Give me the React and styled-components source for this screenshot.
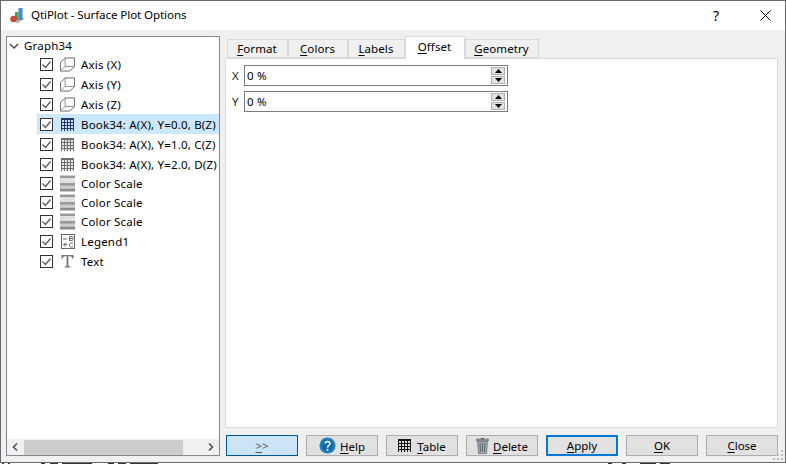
import React from 'react';
import styled, { createGlobalStyle } from 'styled-components';

const Global = createGlobalStyle`
  html, body { margin: 0; padding: 0; background: #fff; }
  body { width: 786px; height: 464px; overflow: hidden; font-family: "Noto Sans", "DejaVu Sans", sans-serif; }
`;
const Page = styled.div`display: flex; flex-direction: column; width: 786px; height: 464px;`;
const Win = styled.div`
  width: 786px; height: 463px; box-sizing: border-box; background: #f0f0f0;
  border: 1px solid #6a6a6a; display: flex; flex-direction: column; position: relative;
`;
const Residue = styled.svg`display: block; width: 786px; height: 1px; flex: none;`;
const TitleBar = styled.div`
  height: 29px; flex: none; background: #fff; display: flex; align-items: center; color: #000;
  font-size: 11.6px; padding-left: 8px;
`;
const TitleText = styled.div`margin-left: 6px; flex: 1; letter-spacing: -0.1px; padding-bottom: 2px;`;
const TitleBtn = styled.div`
  width: 46px; height: 29px; box-sizing: border-box; padding-left: ${p => p.$pl ?? 0}px;
  display: flex; align-items: center; justify-content: center; font-size: 14px;
`;
const Body = styled.div`flex: 1; display: flex; padding: 6px 7px 6px 5px; gap: 5px; min-height: 0;`;
const TreeBox = styled.div`
  width: 214px; flex: none; box-sizing: border-box; border: 1px solid #828790; background: #fff;
  display: flex; flex-direction: column;
`;
const TreeList = styled.div`flex: 1; min-height: 0; overflow: hidden; font-size: 11.5px; color: #000;`;
const Row = styled.div`
  height: ${p => p.$h}px; display: flex; align-items: center; white-space: nowrap;
  margin-left: 30px; padding-left: 3px; overflow: hidden;
  background: ${p => p.$sel ? '#cce8ff' : 'transparent'};
`;
const RootRow = styled.div`height: 17px; display: flex; align-items: center; padding-left: 2px; gap: 5px;`;
const Check = styled.svg`width: 13px; height: 13px; flex: none; margin-right: 7px;`;
const IconSlot = styled.span`
  width: 15px; height: 18px; flex: none; display: flex; align-items: center; justify-content: center; margin-right: 6px;
`;
const Label = styled.span`letter-spacing: 0.19px;`;
const HScroll = styled.div`height: 16px; flex: none; background: #f0f0f0; display: flex; align-items: center;`;
const ScrollArrow = styled.svg`width: 17px; height: 16px; flex: none;`;
const ScrollThumb = styled.div`height: 15px; width: 159px; background: #cdcdcd;`;
const ScrollRest = styled.div`flex: 1;`;
const Right = styled.div`flex: 1; display: flex; flex-direction: column; min-width: 0;`;
const TabBar = styled.div`height: 22px; flex: none; display: flex; align-items: flex-end; padding-left: 2px; position: relative; z-index: 1; font-size: 11.5px;`;
const Tab = styled.div`
  box-sizing: border-box; width: ${p => p.$w}px;
  height: ${p => p.$active ? 23 : 19}px; margin-bottom: ${p => p.$active ? -1 : 0}px;
  padding-bottom: ${p => p.$active ? 3 : 0}px;
  padding-right: 1px;
  background: ${p => p.$active ? '#fff' : '#f0f0f0'};
  border: 1px solid #d9d9d9; border-bottom: ${p => p.$active ? 'none' : '1px solid #d9d9d9'};
  display: flex; align-items: center; justify-content: center; color: #000; letter-spacing: 0.1px;
`;
const U = styled.span`text-decoration: underline; text-underline-offset: 2px;`;
const Panel = styled.div`
  flex: 1; box-sizing: border-box; background: #fff; border: 1px solid #d9d9d9; padding: 6px 6px;
  display: flex; flex-direction: column; gap: 5px; font-size: 11.5px; width: 553px;
`;
const SpinRow = styled.div`display: flex; align-items: center; height: 21px;`;
const SpinLabel = styled.div`width: 12px; color: #222;`;
const SpinInput = styled.div`
  width: 264px; height: 21px; box-sizing: border-box; border: 1px solid #7a7a7a; background: #fff;
  display: flex; align-items: center; justify-content: space-between; padding: 1px 1px 1px 2px; color: #000;
`;
const SpinVal = styled.span`letter-spacing: 0.2px;`;
const SpinBtns = styled.div`display: flex; flex-direction: column; gap: 1px; width: 14px; margin-right: 1px;`;
const SpinBtn = styled.div`
  height: 8px; background: #e1e1e1; border: 1px solid #b0b0b0; box-sizing: border-box;
  display: flex; align-items: center; justify-content: center;
`;
const Tri = styled.svg`width: 7px; height: 4px; display: block;`;
const Footer = styled.div`flex: none; height: 21px; margin-top: 7px; display: flex; gap: 8px; padding-left: 1px; font-size: 11.5px;`;
const Btn = styled.div`
  width: 72px; height: 21px; box-sizing: border-box; display: flex; align-items: center; justify-content: center; gap: 4px;
  color: ${p => p.$primary ? '#555' : '#000'};
  background: ${p => p.$primary ? '#cce4f7' : '#e1e1e1'};
  border: ${p => p.$apply ? '2px solid #0078d7' : p.$primary ? '1px solid #005499' : '1px solid #adadad'};
`;
const IconLabel = styled.span`margin-top: 1px; margin-left: ${p => p.$ml ?? 0}px;`;
const Grip = styled.svg`position: absolute; right: 1px; bottom: 1px; width: 12px; height: 12px;`;

const CheckIcon = () => (
  <Check viewBox="0 0 13 13">
    <rect x="0.5" y="0.5" width="12" height="12" fill="#fff" stroke="#333" />
    <path d="M2.5 6.5l3 3 5-6" fill="none" stroke="#555" strokeWidth="1.2" />
  </Check>
);
const Cube = () => (
  <svg width="16" height="15" viewBox="0 0 16 15" fill="none" stroke="#666" strokeWidth="1">
    <path d="M0.5 14.5V5.5L5.5 0.5H15.5V9.5L10.5 14.5Z" />
    <path d="M5.5 0.5V9.5H15.5M5.5 9.5L0.5 14.5" stroke="#8a8a8a" />
  </svg>
);
const GridCells = ({ fill }) => [1, 4, 7, 10].flatMap(x => [2, 5, 8, 11].map(y => (
  <rect key={x + '-' + y} x={x} y={y} width="2" height="2" fill={fill} />
)));
const Grid = ({ c, cell }) => (
  <svg width="13" height="13" viewBox="0 0 13 13">
    <rect width="13" height="13" fill={c} />
    <GridCells fill={cell} />
  </svg>
);
const Scale = () => (
  <svg width="16" height="17" viewBox="0 0 16 17">
    <rect y="0" width="16" height="3" fill="#999" />
    <rect y="3" width="16" height="3" fill="#e2e2e2" />
    <rect y="6" width="16" height="2" fill="#ddd" />
    <rect y="8" width="16" height="3" fill="#999" />
    <rect y="11" width="16" height="3" fill="#ccc" />
    <rect y="14" width="16" height="3" fill="#8c8c8c" />
  </svg>
);
const LegendIcon = () => (
  <svg width="14" height="15" viewBox="0 0 14 15" fill="none" stroke="#666">
    <rect x="0.5" y="0.5" width="13" height="14" />
    <path d="M2 5h4M2 10.5h4" />
    <path d="M8.5 2.5h2.5q1 0 1 1t-1 1h-2.5m0 0h2.5q1 0 1 1t-1 1h-2.5zM8.5 2.5v4.5M12 9h-2.5q-1 0-1 2t1 2h2.5" strokeWidth="0.9" />
    <path d="M4 8.5v4" />
  </svg>
);
const TextIcon = () => (
  <svg width="13" height="14" viewBox="0 0 14 14" fill="#777">
    <path d="M0.5 0.5h13v4h-1Q12 1.5 8 1.5v11l2 .5v1H4v-1l2-.5v-11Q2 1.5 1.5 4.5h-1z" />
  </svg>
);

const rows = [
  { h: 20, t: 'Axis (X)', i: <Cube /> },
  { h: 20, t: 'Axis (Y)', i: <Cube /> },
  { h: 20, t: 'Axis (Z)', i: <Cube /> },
  { h: 20, t: 'Book34: A(X), Y=0.0, B(Z)', i: <Grid c="#1f3864" cell="#cfe0f0" />, sel: true },
  { h: 20, t: 'Book34: A(X), Y=1.0, C(Z)', i: <Grid c="#6e6e6e" cell="#e8e8e8" /> },
  { h: 20, t: 'Book34: A(X), Y=2.0, D(Z)', i: <Grid c="#6e6e6e" cell="#e8e8e8" /> },
  { h: 19, t: 'Color Scale', i: <Scale /> },
  { h: 19, t: 'Color Scale', i: <Scale /> },
  { h: 19, t: 'Color Scale', i: <Scale /> },
  { h: 20, t: 'Legend1', i: <LegendIcon /> },
  { h: 20, t: 'Text', i: <TextIcon /> },
];

const Spin = ({ label }) => (
  <SpinRow>
    <SpinLabel>{label}</SpinLabel>
    <SpinInput>
      <SpinVal>0 %</SpinVal>
      <SpinBtns>
        <SpinBtn><Tri viewBox="0 0 7 4"><path d="M3.5 0L7 4H0z" fill="#000" /></Tri></SpinBtn>
        <SpinBtn><Tri viewBox="0 0 7 4"><path d="M0 0H7L3.5 4z" fill="#000" /></Tri></SpinBtn>
      </SpinBtns>
    </SpinInput>
  </SpinRow>
);

export default function App() {
  return (
    <Page>
      <Global />
      <Win>
        <TitleBar>
          <svg width="16" height="18" viewBox="0 0 16 18">
            <path d="M0.5 12l7-4.5 8 4-7 5z" fill="#b8b8b8" />
            <rect x="9.5" y="1" width="4" height="12" fill="#3f8fd0" />
            <rect x="6" y="5" width="3.5" height="8" fill="#4aa05a" />
            <circle cx="4.5" cy="12" r="3.2" fill="#d8433a" />
          </svg>
          <TitleText>QtiPlot - Surface Plot Options</TitleText>
          <TitleBtn>?</TitleBtn>
          <TitleBtn $pl={7}>
            <svg width="11" height="11" viewBox="0 0 11 11"><path d="M0.5 0.5l10 10M10.5 0.5l-10 10" stroke="#000" fill="none" /></svg>
          </TitleBtn>
        </TitleBar>
        <Body>
          <TreeBox>
            <TreeList>
              <RootRow>
                <svg width="10" height="10" viewBox="0 0 10 10"><path d="M1 3l4 4 4-4" fill="none" stroke="#444" strokeWidth="1.4" /></svg>
                <Label>Graph34</Label>
              </RootRow>
              {rows.map((r, i) => (
                <Row key={i} $h={r.h} $sel={r.sel}>
                  <CheckIcon />
                  <IconSlot>{r.i}</IconSlot>
                  <Label>{r.t}</Label>
                </Row>
              ))}
            </TreeList>
            <HScroll>
              <ScrollArrow viewBox="0 0 17 16"><path d="M10 4.5L6.5 8l3.5 3.5" fill="none" stroke="#505050" strokeWidth="1.6" /></ScrollArrow>
              <ScrollThumb />
              <ScrollRest />
              <ScrollArrow viewBox="0 0 17 16"><path d="M7 4.5L10.5 8 7 11.5" fill="none" stroke="#505050" strokeWidth="1.6" /></ScrollArrow>
            </HScroll>
          </TreeBox>
          <Right>
            <TabBar>
              <Tab $w={61}><span><U>F</U>ormat</span></Tab>
              <Tab $w={60}><span><U>C</U>olors</span></Tab>
              <Tab $w={57}><span><U>L</U>abels</span></Tab>
              <Tab $w={60} $active><span><U>O</U>ffset</span></Tab>
              <Tab $w={74}><span><U>G</U>eometry</span></Tab>
            </TabBar>
            <Panel>
              <Spin label="X" />
              <Spin label="Y" />
            </Panel>
            <Footer>
              <Btn $primary><span><U>&gt;</U>&gt;</span></Btn>
              <Btn>
                <svg width="17" height="17" viewBox="0 0 18 18">
                  <circle cx="9" cy="9" r="8.5" fill="#1878b8" />
                  <circle cx="9" cy="9" r="7" fill="#0f6aa8" stroke="#4aa3d8" strokeWidth="0.6" />
                  <path d="M6.5 7a2.5 2.3 0 1 1 3.8 2c-.9.6-1.3 1-1.3 2" fill="none" stroke="#fff" strokeWidth="1.7" />
                  <circle cx="9" cy="13.5" r="1.1" fill="#fff" />
                </svg>
                <IconLabel><U>H</U>elp</IconLabel>
              </Btn>
              <Btn>
                <svg width="13" height="13" viewBox="0 0 13 13">
                  <rect width="13" height="13" fill="#111" />
                  <GridCells fill="#e1e1e1" />
                </svg>
                <IconLabel $ml={2}><U>T</U>able</IconLabel>
              </Btn>
              <Btn>
                <svg width="13" height="17" viewBox="0 0 13 17">
                  <path d="M5 1h3v1H5z" fill="#555" />
                  <rect x="0.5" y="2" width="12" height="2" fill="#8a9aa5" stroke="#556" strokeWidth="0.5" />
                  <path d="M1.5 4.5h10l-1 12h-8z" fill="#9fb0ba" stroke="#556" strokeWidth="0.6" />
                  <path d="M4 6l.4 9M6.5 6v9M9 6l-.4 9" stroke="#4f5a60" strokeWidth="0.9" />
                </svg>
                <IconLabel><U>D</U>elete</IconLabel>
              </Btn>
              <Btn $apply><span><U>A</U>pply</span></Btn>
              <Btn><span><U>O</U>K</span></Btn>
              <Btn><span><U>C</U>lose</span></Btn>
            </Footer>
          </Right>
        </Body>
        <Grip viewBox="0 0 12 12" fill="#bdbdbd">
          <rect x="9" y="1" width="2" height="2" />
          <rect x="5" y="5" width="2" height="2" /><rect x="9" y="5" width="2" height="2" />
          <rect x="1" y="9" width="2" height="2" /><rect x="5" y="9" width="2" height="2" /><rect x="9" y="9" width="2" height="2" />
        </Grip>
      </Win>
      <Residue viewBox="0 0 786 1">
        <path d="M2 0h2v1H2zM8 0h2v1H8zM41 0h4v1h-4zM50 0h8v1h-8zM62 0h30v1H62zM108 0h6v1h-6zM118 0h8v1h-8zM130 0h28v1h-28zM608 0h4v1h-4zM622 0h4v1h-4zM640 0h16v1h-16zM660 0h10v1h-10z" fill="#333" />
      </Residue>
    </Page>
  );
}
